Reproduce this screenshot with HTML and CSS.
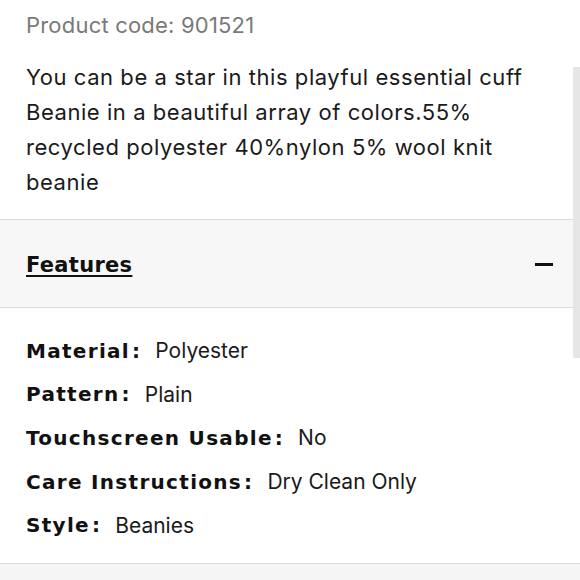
FILE: index.html
```html
<!DOCTYPE html>
<html>
<head>
<meta charset="utf-8">
<link rel="stylesheet" href="styles.css">
</head>
<body>
<div class="page">
  <section class="desc">
    <p class="code">Product code: 901521</p>
    <p class="text">You can be a star in this playful essential cuff Beanie in a beautiful array of colors.55% recycled polyester 40%nylon 5% wool knit beanie</p>
  </section>
  <section class="acc-head">
    <h2 class="acc-title">Features</h2>
    <span class="minus"></span>
  </section>
  <section class="features">
    <div class="row"><span class="label">Material<span class="colon">:</span></span><span class="val">Polyester</span></div>
    <div class="row"><span class="label">Pattern<span class="colon">:</span></span><span class="val">Plain</span></div>
    <div class="row"><span class="label">Touchscreen Usable<span class="colon">:</span></span><span class="val">No</span></div>
    <div class="row"><span class="label">Care Instructions<span class="colon">:</span></span><span class="val">Dry Clean Only</span></div>
    <div class="row"><span class="label">Style<span class="colon">:</span></span><span class="val">Beanies</span></div>
  </section>
  <section class="next"></section>
  <div class="scrollbar"></div>
</div>
</body>
</html>
```
FILE: styles.css
```css
html, body { margin: 0; padding: 0; background: #fff; }
body { font-family: Inter, "Liberation Sans", sans-serif; color: #1a1a1a; }
.page { position: relative; width: 580px; height: 580px; overflow: hidden; }
.desc { padding: 9px 26px 0 26px; height: 210px; }
.code { margin: 0; font-size: 22px; letter-spacing: 0.2px; color: #7a7a7a; line-height: 32px; }
.text { margin: 19px 0 0 0; font-size: 22px; letter-spacing: 0.55px; line-height: 35px; color: #1a1a1a; }
.acc-head { border-top: 1px solid #dcdcdc; border-bottom: 1px solid #dcdcdc; background: #f7f7f7; display: flex; align-items: center; justify-content: space-between; padding: 2px 27px 0 26px; box-sizing: border-box; height: 89px; }
.acc-title { margin: 0; font-family: "DejaVu Sans", sans-serif; font-weight: 700; font-size: 21px; letter-spacing: 0.3px; text-decoration: underline; text-decoration-thickness: 2px; text-underline-offset: 3px; color: #111; }
.minus { width: 18px; height: 3px; background: #111; }
.features { padding: 21px 26px 0 26px; height: 255px; box-sizing: border-box; display: flex; flex-direction: column; }
.row { height: 43.6px; flex-shrink: 0; display: flex; align-items: center; font-size: 21px; }
.label { font-family: "DejaVu Sans", sans-serif; font-weight: 700; font-size: 20px; letter-spacing: 1.3px; color: #111; margin-right: 14px; }
.colon { margin-left: 2px; }
.val { color: #1a1a1a; }
.next { border-top: 1px solid #dcdcdc; background: #f5f5f5; height: 40px; }
.scrollbar { position: absolute; right: 0; top: 67px; width: 7px; height: 291px; background: #e6e6e6; }
```
